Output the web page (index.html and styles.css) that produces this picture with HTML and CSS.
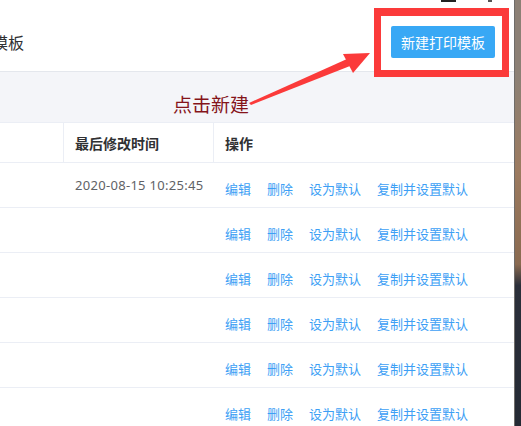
FILE: index.html
```html
<!DOCTYPE html>
<html lang="zh-CN">
<head>
    <meta charset="UTF-8">
    <meta name="viewport" content="width=device-width, initial-scale=1.0">
    <link rel="stylesheet" href="styles.css">
    <title>打印模板</title>
</head>
<body>
    <div class="screen">
        <div class="window">
            <!-- title bar controls, mostly cut off at the top -->
            <div class="win-controls">
                <span class="ctl-min"></span>
                <span class="ctl-max"></span>
            </div>

            <header class="page-head">
                <h2 class="page-title">打印模板</h2>
                <button class="btn-primary">新建打印模板</button>
            </header>

            <div class="toolbar"></div>

            <table class="grid">
                <colgroup>
                    <col class="col-name">
                    <col class="col-time">
                    <col class="col-ops">
                </colgroup>
                <thead>
                    <tr>
                        <th></th>
                        <th>最后修改时间</th>
                        <th>操作</th>
                    </tr>
                </thead>
                <tbody>
                    <tr>
                        <td></td>
                        <td class="time">2020-08-15 10:25:45</td>
                        <td><div class="ops"><a>编辑</a><a>删除</a><a>设为默认</a><a>复制并设置默认</a></div></td>
                    </tr>
                    <tr>
                        <td></td>
                        <td class="time"></td>
                        <td><div class="ops"><a>编辑</a><a>删除</a><a>设为默认</a><a>复制并设置默认</a></div></td>
                    </tr>
                    <tr>
                        <td></td>
                        <td class="time"></td>
                        <td><div class="ops"><a>编辑</a><a>删除</a><a>设为默认</a><a>复制并设置默认</a></div></td>
                    </tr>
                    <tr>
                        <td></td>
                        <td class="time"></td>
                        <td><div class="ops"><a>编辑</a><a>删除</a><a>设为默认</a><a>复制并设置默认</a></div></td>
                    </tr>
                    <tr>
                        <td></td>
                        <td class="time"></td>
                        <td><div class="ops"><a>编辑</a><a>删除</a><a>设为默认</a><a>复制并设置默认</a></div></td>
                    </tr>
                    <tr>
                        <td></td>
                        <td class="time"></td>
                        <td><div class="ops"><a>编辑</a><a>删除</a><a>设为默认</a><a>复制并设置默认</a></div></td>
                    </tr>
                </tbody>
            </table>

            <!-- screenshot annotation -->
            <div class="mark-box"></div>
            <svg class="mark-arrow" width="514" height="130" viewBox="0 0 514 130">
                <polygon points="249,103 347,59 350,66 251,105" fill="#fb3a3a"/>
                <polygon points="343,54 370,53 353,73" fill="#fb3a3a"/>
            </svg>
            <span class="mark-label">点击新建</span>
        </div>
        <div class="desktop"></div>
    </div>
</body>
</html>
```

FILE: styles.css
```css
/* print template list */
* {
    box-sizing: border-box;
}

body {
    margin: 0;
    padding: 0;
    font-family: "Noto Sans", "Noto Sans CJK SC", sans-serif;
    background-color: #2a2e38;
    overflow: hidden;
}

.screen {
    display: flex;
    height: 426px;
}

.window {
    position: relative;
    width: 515px;
    background-color: #fff;
    border-right: 1px solid #6f6c69;
    overflow: hidden;
}

.desktop {
    flex: 1;
    background: linear-gradient(180deg, #8c8075 0%, #8c8075 18%, #9c7b60 40%, #8a6a50 62%, #2b2f3a 67%, #252a34 100%);
}

.win-controls {
    position: absolute;
    top: 0;
    left: 441px;
    display: flex;
    gap: 32px;
}

.ctl-min {
    width: 15px;
    height: 2px;
    background-color: #222;
}

.ctl-max {
    width: 4px;
    height: 2px;
    background-color: #555;
}

.page-head {
    display: flex;
    justify-content: space-between;
    align-items: center;
    height: 72px;
    padding: 13px 19px 0 0;
    border-bottom: 1px solid #e4e7ed;
}

.page-title {
    margin: 0 0 0 -40px;
    font-size: 16px;
    font-weight: normal;
    color: #303133;
}

.btn-primary {
    width: 104px;
    height: 32px;
    padding: 0;
    border: none;
    border-radius: 2px;
    background-color: #38a8f5;
    color: #fff;
    font-family: inherit;
    font-size: 14px;
    cursor: pointer;
}

.toolbar {
    height: 50px;
    background-color: #f4f5f9;
}

.grid {
    width: 514px;
    table-layout: fixed;
    border-collapse: separate;
    border-spacing: 0;
    border-top: 1px solid #ebeef5;
}

.col-name {
    width: 64px;
}

.col-time {
    width: 150px;
}

.grid th {
    height: 40px;
    padding: 0 11px;
    text-align: left;
    font-size: 14px;
    font-weight: bold;
    color: #303133;
    border-bottom: 1px solid #ebeef5;
    border-right: 1px solid #ebeef5;
}

.grid th:last-child {
    border-right: none;
}

.grid td {
    height: 45px;
    padding: 0 11px;
    font-size: 13px;
    color: #606266;
    border-bottom: 1px solid #ebeef5;
}

.grid .time {
    padding-right: 0;
    letter-spacing: 0.3px;
    white-space: nowrap;
}

.ops {
    display: flex;
    gap: 16px;
    padding-top: 6px;
}

.ops a {
    color: #3d9ff5;
    cursor: pointer;
}

.mark-box {
    position: absolute;
    left: 374px;
    top: 8px;
    width: 135px;
    height: 69px;
    border: 7px solid #fb3a3a;
    border-top-width: 8px;
}

.mark-arrow {
    position: absolute;
    left: 0;
    top: 0;
}

.mark-label {
    position: absolute;
    left: 173px;
    top: 90px;
    font-size: 19px;
    color: #85141a;
}
```
